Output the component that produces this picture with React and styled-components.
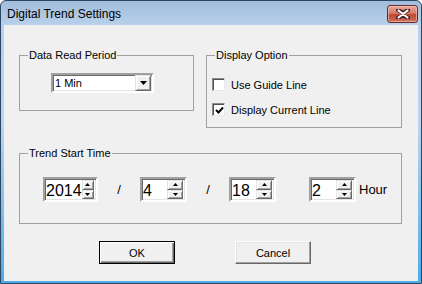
import styled, { createGlobalStyle, css } from 'styled-components'

const GlobalStyle = createGlobalStyle`
  html, body {
    margin: 0;
    padding: 0;
    background: #fff;
  }
  body {
    font-family: "Liberation Sans", Arial, sans-serif;
    color: #000;
  }
`

function CloseGlyph() {
  return (
    <svg width="14" height="10" viewBox="0 0 14 10">
      <path
        d="M2 1 L7 4 L12 1 M2 9 L7 6 L12 9"
        stroke="#3a1a1a"
        strokeWidth="4"
        fill="none"
        strokeLinecap="round"
      />
      <path
        d="M2.5 1.5 L11.5 8.5 M11.5 1.5 L2.5 8.5"
        stroke="#fff"
        strokeWidth="2.2"
        fill="none"
        strokeLinecap="round"
      />
    </svg>
  )
}

function Triangle({ up }) {
  return (
    <svg width="7" height="4" viewBox="0 0 7 4">
      <path d={up ? 'M3.5 0 L7 4 L0 4 Z' : 'M0 0 L7 0 L3.5 4 Z'} fill="#000" />
    </svg>
  )
}

function SpinArrow({ up }) {
  return (
    <svg width="5" height="3" viewBox="0 0 5 3">
      <path d={up ? 'M2.5 0 L5 3 L0 3 Z' : 'M0 0 L5 0 L2.5 3 Z'} fill="#000" />
    </svg>
  )
}

function CheckMark() {
  return (
    <svg width="9" height="9" viewBox="0 0 9 9">
      <path d="M1 4 L3.5 6.5 L8 1.5" stroke="#000" strokeWidth="2" fill="none" />
    </svg>
  )
}

function SpinBox({ value, width }) {
  return (
    <Spin $w={width}>
      <SpinText>{value}</SpinText>
      <SpinButtons>
        <SpinButton>
          <SpinArrow up />
        </SpinButton>
        <SpinButton>
          <SpinArrow />
        </SpinButton>
      </SpinButtons>
    </Spin>
  )
}

function App() {
  return (
    <>
      <GlobalStyle />
      <Window>
        <TitleBar>
          <Title>Digital Trend Settings</Title>
          <CloseButton>
            <CloseGlyph />
          </CloseButton>
        </TitleBar>
        <Client>
          <TopRow>
            <GroupBox $w={175} $h={56} $pad="17px 0 0 31px">
              <Legend>Data Read Period</Legend>
              <Combo>
                <ComboText>1 Min</ComboText>
                <DropButton>
                  <Triangle />
                </DropButton>
              </Combo>
            </GroupBox>
            <GroupBox $w={196} $h={73} $pad="22px 0 0 5px">
              <Legend>Display Option</Legend>
              <CheckList>
                <CheckRow>
                  <CheckBox />
                  <CheckLabel>Use Guide Line</CheckLabel>
                </CheckRow>
                <CheckRow>
                  <CheckBox>
                    <CheckMark />
                  </CheckBox>
                  <CheckLabel>Display Current Line</CheckLabel>
                </CheckRow>
              </CheckList>
            </GroupBox>
          </TopRow>
          <TrendGroup>
            <GroupBox $w={383} $h={71} $pad="23px 0 0 23px">
              <Legend>Trend Start Time</Legend>
              <TimeRow>
                <SpinBox value="2014" width={55} />
                <Sep $w={42}>/</Sep>
                <SpinBox value="4" width={47} />
                <Sep $w={42}>/</Sep>
                <SpinBox value="18" width={47} />
                <Sep $w={33} />
                <SpinBox value="2" width={47} />
                <Unit>Hour</Unit>
              </TimeRow>
            </GroupBox>
          </TrendGroup>
          <ButtonRow>
            <Button $default>OK</Button>
            <Button>Cancel</Button>
          </ButtonRow>
        </Client>
      </Window>
    </>
  )
}

export default App

const Window = styled.div`
  width: 422px;
  height: 284px;
  box-sizing: border-box;
  display: flex;
  flex-direction: column;
  border: 1px solid #2c4766;
  border-radius: 6px 6px 0 0;
  background: linear-gradient(#a2bddb 0, #b8d0ea 24px, #bcd5ee 120px, #4eaae6 100%);
  overflow: hidden;
`

const TitleBar = styled.div`
  height: 24px;
  flex: none;
  display: flex;
  align-items: flex-start;
  justify-content: space-between;
  padding: 0 3px 0 6px;
`

const Title = styled.div`
  font-size: 12px;
  line-height: 15px;
  margin-top: 6px;
  color: #000;
`

const CloseButton = styled.div`
  width: 31px;
  height: 18px;
  margin-top: 4px;
  box-sizing: border-box;
  border: 1px solid #6b2a2a;
  border-radius: 3px;
  background: linear-gradient(#e9a898 0, #d47a68 45%, #c0452f 55%, #d0705a 100%);
  display: flex;
  align-items: center;
  justify-content: center;
  box-shadow: inset 0 0 0 1px rgba(255, 220, 210, 0.5);
`

const Client = styled.div`
  flex: 1;
  margin: 0 3px 2px 3px;
  background: #f0f0f0;
  padding: 30px 0 0 15px;
  display: flex;
  flex-direction: column;
  font-size: 11px;
`

const TopRow = styled.div`
  display: flex;
  align-items: flex-start;
  gap: 12px;
`

const GroupBox = styled.div`
  position: relative;
  width: ${p => p.$w}px;
  height: ${p => p.$h}px;
  box-sizing: border-box;
  border: 1px solid #a0a0a0;
  padding: ${p => p.$pad};
`

const Legend = styled.span`
  position: absolute;
  top: -7px;
  left: 8px;
  padding: 0 1px;
  background: #f0f0f0;
  font-size: 11px;
  line-height: 13px;
  white-space: nowrap;
`

const sunken = css`
  border: 2px solid;
  border-color: #a0a0a0 #fff #fff #a0a0a0;
  box-shadow: inset 1px 1px #696969, inset -1px -1px #e3e3e3;
  background: #fff;
`

const raised = css`
  background: #f0f0f0;
  border: 1px solid;
  border-color: #e3e3e3 #696969 #696969 #e3e3e3;
  box-shadow: inset 1px 1px #fff, inset -1px -1px #a0a0a0;
`

const Combo = styled.div`
  width: 103px;
  height: 20px;
  box-sizing: border-box;
  display: flex;
  align-items: center;
  ${sunken}
  padding: 1px;
`

const ComboText = styled.span`
  flex: 1;
  font-size: 11px;
  padding-left: 1px;
`

const DropButton = styled.div`
  width: 16px;
  height: 16px;
  box-sizing: border-box;
  ${raised}
  display: flex;
  align-items: center;
  justify-content: center;
`

const CheckList = styled.div`
  display: flex;
  flex-direction: column;
  gap: 12px;
`

const CheckRow = styled.div`
  display: flex;
  align-items: center;
  height: 13px;
`

const CheckBox = styled.div`
  width: 13px;
  height: 13px;
  box-sizing: border-box;
  border: 1px solid;
  border-color: #8a8a8a #e8e8e8 #e8e8e8 #8a8a8a;
  box-shadow: inset 1px 1px #505050;
  background: #fff;
  display: flex;
  align-items: center;
  justify-content: center;
  padding: 1px 0 0 1px;
`

const CheckLabel = styled.span`
  margin-left: 6px;
  font-size: 11px;
  white-space: nowrap;
`

const TrendGroup = styled.div`
  margin-top: 25px;
`

const TimeRow = styled.div`
  display: flex;
  align-items: center;
`

const Spin = styled.div`
  width: ${p => p.$w}px;
  height: 25px;
  box-sizing: border-box;
  display: flex;
  ${sunken}
  padding: 1px;
`

const SpinText = styled.span`
  flex: 1;
  font-size: 16px;
  line-height: 21px;
`

const SpinButtons = styled.div`
  width: 16px;
  display: flex;
  flex-direction: column;
  margin-right: 1px;
`

const SpinButton = styled.div`
  flex: 1;
  box-sizing: border-box;
  ${raised}
  display: flex;
  align-items: center;
  justify-content: center;
`

const Sep = styled.span`
  width: ${p => p.$w}px;
  text-align: center;
  font-size: 13px;
`

const Unit = styled.span`
  margin-left: 3px;
  font-size: 13px;
`

const ButtonRow = styled.div`
  display: flex;
  gap: 60px;
  margin-top: 17px;
  padding-left: 80px;
`

const Button = styled.button`
  width: 76px;
  height: 23px;
  box-sizing: border-box;
  font-family: "Liberation Sans", Arial, sans-serif;
  font-size: 11px;
  color: #000;
  padding: 0;
  background: #f0f0f0;
  border: 1px solid;
  border-color: #fff #696969 #696969 #fff;
  box-shadow: inset -1px -1px #a0a0a0, inset 1px 1px #e3e3e3;

  ${p =>
    p.$default &&
    css`
      border: 1px solid #000;
      box-shadow: inset 1px 1px #fff, inset -1px -1px #696969, inset -2px -2px #a0a0a0;
    `}
`
